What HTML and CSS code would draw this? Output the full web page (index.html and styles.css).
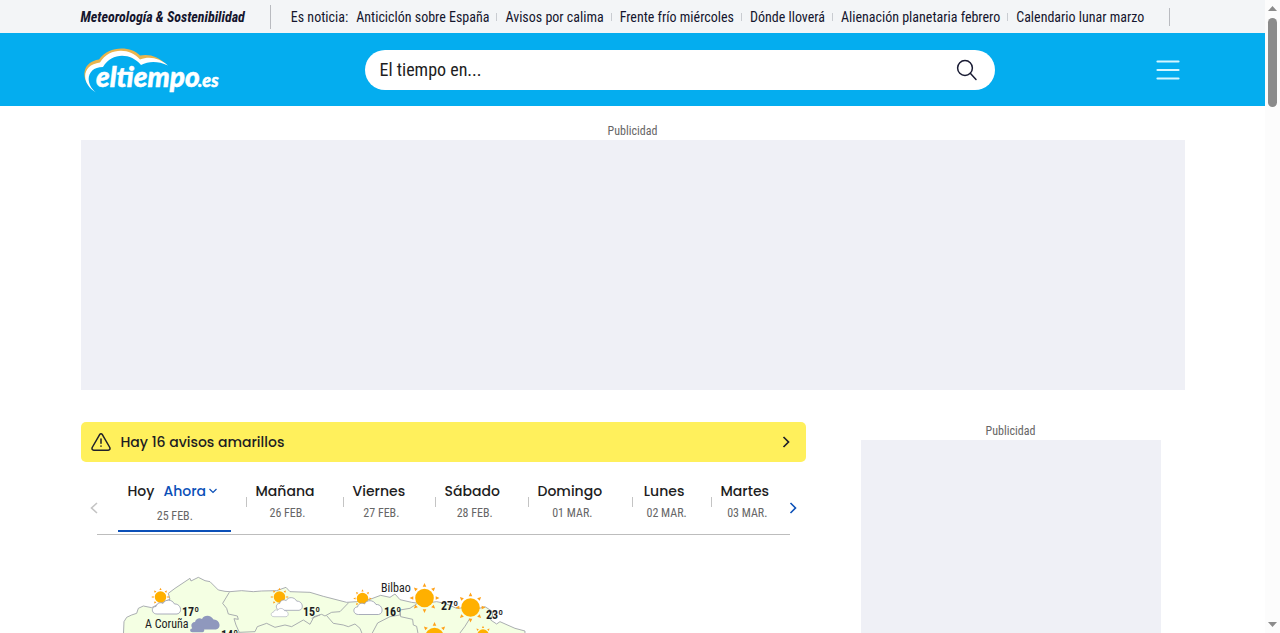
FILE: index.html
```html
<!DOCTYPE html>
<html lang="es">
<head>
<meta charset="utf-8">
<meta name="viewport" content="width=device-width, initial-scale=1">
<title>El tiempo</title>
<link rel="stylesheet" href="styles.css">
</head>
<body>
<div class="page">
  <div class="topbar">
    <nav class="wrap topbar-inner" aria-label="Es noticia">
      <a class="topbar-brand" href="#">Meteorología &amp; Sostenibilidad</a>
      <div class="news">
        <span class="news-label">Es noticia:</span>
        <ul class="news-list">
          <li><a href="#">Anticiclón sobre España</a></li>
          <li><a href="#">Avisos por calima</a></li>
          <li><a href="#">Frente frío miércoles</a></li>
          <li><a href="#">Dónde lloverá</a></li>
          <li><a href="#">Alienación planetaria febrero</a></li>
          <li><a href="#">Calendario lunar marzo</a></li>
        </ul>
      </div>
    </nav>
  </div>

  <header class="header">
    <div class="wrap header-inner">
      <a class="logo" href="#" aria-label="eltiempo.es">
        <svg width="142" height="50" viewBox="0 0 142 50">
          <path d="M8 41C0 31 2 17 18 14.500C27 .5 50 .5 59 10.500C68 8.500 78 11.500 86 20C76 14 67 14 60 17C50 4 31 4 22 19C6 19 2 30 8 41Z" fill="#e9b44c"/>
          <path d="M15 47.500C-1 38 1 19.500 19 17.500C28 2.500 49 2.500 59 14.500C69 10.500 79 13.500 87 20.500C77 16 68 16 60 20C50 8 31 7 22 22C6 22 3 38 15 47.500Z" fill="#fff"/>
          <text class="logo-name" x="15" y="42">eltiempo</text>
          <text class="logo-tld" x="117" y="42">.es</text>
        </svg>
      </a>
      <form class="search">
        <input class="search-input" type="text" aria-label="El tiempo en" placeholder="El tiempo en...">
        <button class="icon-button" type="button" aria-label="Buscar">
          <svg width="22" height="22" viewBox="0 0 22 22" fill="none" stroke="#191b33" stroke-width="1.5" stroke-linecap="round"><circle cx="9" cy="9" r="7.4"/><path d="M14.3 14.3L20 20.5"/></svg>
        </button>
      </form>
      <button class="icon-button menu" type="button" aria-label="Menú">
        <svg width="24" height="20" viewBox="0 0 24 20" stroke="#d5f6ff" stroke-width="2.2" stroke-linecap="round"><path d="M1.5 1.500H22.500M1.500 10H22.500M1.500 18.500H22.500"/></svg>
      </button>
    </div>
  </header>

  <div class="wrap">
    <section class="ad ad-top">
      <p class="ad-label">Publicidad</p>
      <div class="ad-box ad-billboard"></div>
    </section>

    <div class="columns">
      <main>
        <a class="alert" href="#">
          <svg width="20" height="18" viewBox="0 0 20 18" fill="none" stroke="#20202a" stroke-width="1.500" stroke-linecap="round" stroke-linejoin="round"><path d="M8.500 1.800Q10-.2 11.500 1.800L18.800 14.500Q19.600 17 17.200 17.200H2.800Q.4 17 1.200 14.500Z"/><path d="M10 6V10.200M10 13V13.200"/></svg>
          <span class="alert-text">Hay 16 avisos amarillos</span>
          <svg width="8" height="12" viewBox="0 0 8 12" fill="none" stroke="#20202a" stroke-width="1.700"><path d="M1.500 1L6.500 6L1.500 11"/></svg>
        </a>

        <div class="days">
          <button class="arrow" type="button" aria-label="Días anteriores">
            <svg width="8" height="12" viewBox="0 0 8 12" fill="none" stroke="#c4c4c4" stroke-width="1.600"><path d="M7 1L1.500 6L7 11"/></svg>
          </button>
          <ul class="day-list">
            <li class="day today"><div class="day-body"><span class="day-name"><a href="#">Hoy</a><button class="now" type="button">Ahora<svg width="8" height="6" viewBox="0 0 8 6" fill="none" stroke="#0b50b8" stroke-width="1.200"><path d="M.5 1L4 4.500L7.500 1"/></svg></button></span><span class="day-date">25 FEB.</span></div></li>
            <li class="day"><a class="day-body" href="#"><span class="day-name">Mañana</span><span class="day-date">26 FEB.</span></a></li>
            <li class="day"><a class="day-body" href="#"><span class="day-name">Viernes</span><span class="day-date">27 FEB.</span></a></li>
            <li class="day"><a class="day-body" href="#"><span class="day-name">Sábado</span><span class="day-date">28 FEB.</span></a></li>
            <li class="day"><a class="day-body" href="#"><span class="day-name">Domingo</span><span class="day-date">01 MAR.</span></a></li>
            <li class="day"><a class="day-body" href="#"><span class="day-name">Lunes</span><span class="day-date">02 MAR.</span></a></li>
            <li class="day"><a class="day-body" href="#"><span class="day-name">Martes</span><span class="day-date">03 MAR.</span></a></li>
          </ul>
          <button class="arrow" type="button" aria-label="Días siguientes">
            <svg width="8" height="12" viewBox="0 0 8 12" fill="none" stroke="#0b50b8" stroke-width="1.600"><path d="M1.500 1L6.500 6L1.500 11"/></svg>
          </button>
        </div>

        <svg class="map" viewBox="0 0 725 120" role="img" aria-label="Mapa del tiempo">
          <defs>
            <g id="sun">
              <circle r="9.300" fill="#ffb000"/>
              <g fill="#ffa21a">
                <g id="pair"><path d="M-1.800-11.200L0-15L1.800-11.200ZM-1.800 11.200L0 15L1.800 11.200Z"/><path d="M-1.800-11.200L0-15L1.800-11.200ZM-1.800 11.200L0 15L1.800 11.200Z" transform="rotate(90)"/></g>
                <use href="#pair" transform="rotate(45)"/>
              </g>
            </g>
            <path id="cloud" d="M5 14.500C-1 14.500-1 7 4 7C5 3 9 2.500 11 4C13-.5 20-.5 22.500 4.500C29 4 31 13.500 25 14.500Z"/>
          </defs>
          <g transform="translate(29 25) scale(.3333)" stroke="#9a9da5" stroke-width="2.500" stroke-linejoin="round" fill="none">
            <path fill="#f4ffe3" d="M38 280L42 185L50 172L65 165L80 160L85 145L100 138L125 143L150 130L180 118L175 100L195 85L240 55L243 63L265 52L285 62L300 65L325 90L345 94L360 95L395 92L430 95L455 93L500 92L528 82L540 95L600 97L640 109L710 127L740 125L780 118L812 106L840 112L855 102L870 119L905 127L935 131L980 125L1005 130L1040 145L1080 142L1105 146L1125 140L1145 153L1148 165L1142 180L1160 192L1170 185L1215 205L1245 213L1245 280Z"/>
            <path d="M358 97L338 130L350 145L355 162L382 168L385 178L372 176L378 195L388 217L435 215L442 200L470 190L495 202L525 195L545 200L580 180L600 193L612 170L635 163L645 168L665 157L690 155L716 128M650 167L670 190L700 195L715 200L735 192L750 205L758 225M787 219L803 189L840 170L870 165L870 150L900 145L920 132M870 150L872 170L908 178L910 195L920 199L925 225M388 217L355 240M1080 175L1065 199L1050 219M630 165L605 175"/>
          </g>
          <g stroke-width=".8">
            <use href="#sun" transform="translate(79.500 62) scale(.62)"/>
            <use href="#cloud" transform="translate(71 64.500)" fill="#fff" stroke="#9498ac"/>
            <use href="#sun" transform="translate(198.500 62) scale(.62)"/>
            <use href="#cloud" transform="translate(195 62) scale(.92)" fill="#fff" stroke="#9498ac"/>
            <use href="#cloud" transform="translate(190 73) scale(.6)" fill="#fff" stroke="#9498ac"/>
            <use href="#sun" transform="translate(281.500 63.500) scale(.62)"/>
            <use href="#cloud" transform="translate(272.500 65)" fill="#fff" stroke="#9498ac"/>
            <use href="#cloud" transform="translate(110 80)" fill="#8f98bd"/>
            <use href="#cloud" transform="translate(109 90) scale(.5)" fill="#8f98bd"/>
            <use href="#sun" transform="translate(343.500 63)"/>
            <use href="#sun" transform="translate(389.500 72.500)"/>
            <use href="#sun" transform="translate(353.500 102)"/>
            <use href="#sun" transform="translate(402 100) scale(.62)"/>
          </g>
          <g class="map-city">
            <text x="64" y="93">A Coruña</text>
            <text x="300" y="57">Bilbao</text>
          </g>
          <g class="map-temp">
            <text x="101" y="81">17º</text>
            <text x="140" y="104">14º</text>
            <text x="222" y="81">15º</text>
            <text x="303" y="81">16º</text>
            <text x="360" y="75">27º</text>
            <text x="405" y="84">23º</text>
          </g>
        </svg>
      </main>

      <aside class="ad">
        <p class="ad-label">Publicidad</p>
        <div class="ad-box ad-side"></div>
      </aside>
    </div>
  </div>
</div>
<div class="scrollbar" aria-hidden="true">
  <svg width="9" height="5" viewBox="0 0 9 5"><path d="M0 5L4.500 0L9 5Z" fill="#8b8b8b"/></svg>
  <div class="thumb"></div>
  <svg width="9" height="5" viewBox="0 0 9 5"><path d="M0 0L4.500 5L9 0Z" fill="#8b8b8b"/></svg>
</div>
</body>
</html>
```
FILE: styles.css
```css
* { box-sizing: border-box; }

:root {
  --condensed: "Roboto Condensed", "Liberation Sans Narrow", Roboto, sans-serif;
  --display: Poppins, Inter, sans-serif;
}

body {
  margin: 0;
  background: #fff;
  color: #1d1d22;
  font-family: var(--condensed);
}

a { color: inherit; text-decoration: none; }
ul { margin: 0; padding: 0; list-style: none; }
button { border: 0; padding: 0; background: none; color: inherit; font: inherit; cursor: pointer; }
svg { display: block; flex: none; }

.page { height: 100vh; overflow: hidden; padding-right: 15px; }
.wrap { width: 100%; max-width: 1104px; margin: 0 auto; }

.topbar { background: #f3f5f7; color: #15162e; }
.topbar-inner { display: flex; align-items: center; height: 33px; font-size: 14px; white-space: nowrap; }
.topbar-brand { padding-right: 25px; font-weight: 700; font-style: italic; line-height: 24px; border-right: 1px solid #b9bbc0; }
.news { display: flex; flex: 1; gap: 8px; align-items: center; margin: 0 15px 0 20px; line-height: 18px; border-right: 1px solid #b9bbc0; }
.news-list { display: flex; align-items: center; }
.news-list li { display: flex; align-items: center; }
.news-list li + li::before { content: ""; width: 1px; height: 8px; margin: 0 8px 0 7px; background: #c9ccd1; }

.header { background: #04adef; }
.header-inner { display: grid; grid-template-columns: 284fr 630fr 190fr; align-items: center; height: 73px; }
.logo { justify-self: start; }
.logo-name, .logo-tld { font-family: Lato, sans-serif; font-weight: 900; font-style: italic; fill: #fff; stroke: #fff; stroke-width: 0.5; }
.logo-name { font-size: 28px; }
.logo-tld { font-size: 18px; }
.search { display: flex; align-items: center; height: 40px; padding: 0 17px 0 15px; background: #fff; border-radius: 20px; }
.search-input { flex: 1; min-width: 0; padding: 0; border: 0; outline: 0; background: none; color: #1d1d22; font: 18px var(--condensed); }
.search-input::placeholder { color: #1d1d22; opacity: 1; }
.menu { justify-self: end; margin-right: 5px; }

.ad { text-align: center; }
.ad-top { padding-top: 16px; }
.ad-label { margin: 0; font-size: 12px; line-height: 18px; color: #666; }
.ad-box { background: #eff0f6; }
.ad-billboard { height: 250px; }
.ad-side { width: 300px; height: 600px; margin: 0 auto; }

.columns { display: grid; grid-template-columns: 725fr 348fr; gap: 31px; padding-top: 32px; }

.alert { display: flex; align-items: center; gap: 10px; height: 40px; padding: 0 16px 0 10px; background: #fff05c; border-radius: 5px; font: 500 14px/20px var(--display); }
.alert-text { flex: 1; }

.days { display: flex; align-items: center; padding: 18px 9px 0; }
.arrow { width: 8px; }
.day-list { display: grid; flex: 1; grid-template-columns: 128fr 97fr 92fr 93fr 104fr 79fr 79fr; margin: 0 -1px; padding-left: 21px; border-bottom: 1px solid #bdbdbd; height: 55px; }
.day { position: relative; display: flex; align-items: flex-start; padding-left: 10px; }
.day + .day::before { content: ""; position: absolute; left: 0; top: 17px; width: 1px; height: 10px; background: #c4c4c4; }
.day-body { display: flex; flex-direction: column; align-items: center; }
.day-name { font: 500 14px/22px var(--display); color: #1d1d22; }
.day-date { padding-left: 5px; font-size: 12px; line-height: 22px; color: #666; }
.today { padding-left: 0; }
.today .day-body { gap: 3px; padding: 0 14px 3px 10px; border-bottom: 2px solid #0b50b8; }
.today .day-name { display: flex; gap: 9px; }
.now { display: flex; align-items: center; gap: 3px; color: #0b50b8; }

.map { width: 100%; height: auto; overflow: visible; }
.map-city { font-size: 12px; fill: #1d1d22; }
.map-temp { font-size: 12px; font-weight: 700; fill: #1d1d22; }

.scrollbar { position: fixed; top: 0; right: 0; bottom: 0; display: flex; flex-direction: column; align-items: center; width: 15px; padding: 6px 0; background: #fcfcfc; }
.thumb { width: 9px; height: 14vh; margin: 7px 0 auto; border-radius: 5px; background: #8b8b8b; }
```
